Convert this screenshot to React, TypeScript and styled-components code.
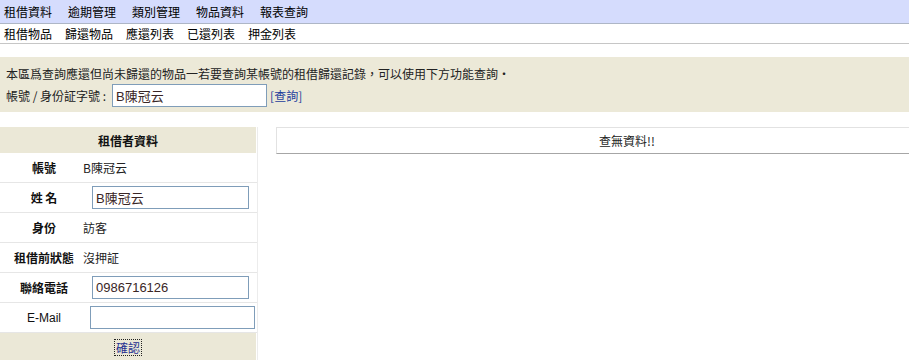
import React from "react";
import styled, { createGlobalStyle } from "styled-components";

const GlobalStyle = createGlobalStyle`
  html, body {
    margin: 0;
    padding: 0;
    overflow: hidden;
    background: #fff;
  }
  body {
    font-family: "Noto Sans CJK TC", "Liberation Sans", sans-serif;
    font-size: 12px;
    color: #1a1a1a;
  }
`;

const MenuBar = styled.nav`
  display: flex;
  align-items: center;
  gap: 16px;
  height: 23px;
  padding-left: 4px;
  background: #d5dcfd;
  border-bottom: 1px solid #aeb6c6;
  font-size: 12px;
  color: #000;
`;

const SubBar = styled.nav`
  display: flex;
  align-items: center;
  gap: 13px;
  height: 19px;
  padding-left: 4px;
  border-bottom: 1px solid #c6c6c6;
  font-size: 12px;
  color: #000;
`;

const MenuItem = styled.span`
  cursor: pointer;
  white-space: nowrap;
`;

const InfoBox = styled.section`
  margin-top: 13px;
  height: 55px;
  box-sizing: border-box;
  padding: 9px 6px 0;
  background: #ece9d8;
  color: #222;
`;

const InfoLine = styled.div`
  line-height: 16px;
  white-space: nowrap;
`;

const SearchRow = styled.div`
  display: flex;
  align-items: center;
  margin-top: 2px;
`;

const TextInput = styled.input<{ $w: number; $ml?: number }>`
  box-sizing: border-box;
  width: ${(p) => p.$w}px;
  height: 23px;
  margin: 0 0 0 ${(p) => p.$ml ?? 0}px;
  padding: 0 3px;
  border: 1px solid #7f9db9;
  background: #fff;
  font-family: "Liberation Sans", "Noto Sans CJK TC", sans-serif;
  font-size: 13px;
  color: #3a2626;
  outline: none;
`;

const BracketLink = styled.a`
  margin-left: 3px;
  color: #1c3c9c;
  text-decoration: none;
  cursor: pointer;
`;

const Main = styled.div`
  display: flex;
  align-items: flex-start;
  gap: 18px;
  margin-top: 15px;
`;

const Renter = styled.section`
  flex: 0 0 258px;
  box-sizing: border-box;
  border-right: 1px solid #ececec;
`;

const PanelHeader = styled.div`
  height: 26px;
  margin-right: 1px;
  display: flex;
  align-items: center;
  justify-content: center;
  background: #ebe8d7;
  font-weight: 700;
  color: #111;
`;

const Row = styled.div`
  display: grid;
  grid-template-columns: 82px 1fr;
  align-items: center;
  height: 29px;
  border-bottom: 1px solid #e6e6e6;
`;

const Label = styled.div<{ $latin?: boolean }>`
  padding-left: 6px;
  text-align: center;
  white-space: nowrap;
  font-weight: ${(p) => (p.$latin ? 400 : 700)};
  font-family: ${(p) =>
    p.$latin
      ? `"Liberation Sans", sans-serif`
      : `"Noto Sans CJK TC", sans-serif`};
  color: #111;
`;

const Value = styled.div`
  padding-left: 1px;
  display: flex;
  align-items: center;
  color: #222;
`;

const ConfirmRow = styled.div`
  height: 29px;
  margin-right: 1px;
  display: flex;
  align-items: center;
  justify-content: center;
  background: #ebe8d7;
`;

const ConfirmLink = styled.a`
  padding: 0 1px;
  border: 1px dotted #222;
  color: #1f2f8f;
  line-height: 15px;
  cursor: pointer;
`;

const Result = styled.section`
  flex: 1 1 auto;
  min-width: 0;
  box-sizing: border-box;
  height: 27px;
  padding-left: 68px;
  display: flex;
  align-items: center;
  justify-content: center;
  border: 1px solid #e2e2e2;
  border-bottom: 1px solid #a6a6a6;
  border-right: none;
  color: #222;
`;

const topMenu = ["租借資料", "逾期管理", "類別管理", "物品資料", "報表查詢"];
const subMenu = ["租借物品", "歸還物品", "應還列表", "已還列表", "押金列表"];

export default function App() {
  return (
    <>
      <GlobalStyle />
      <MenuBar>
        {topMenu.map((m) => (
          <MenuItem key={m}>{m}</MenuItem>
        ))}
      </MenuBar>
      <SubBar>
        {subMenu.map((m) => (
          <MenuItem key={m}>{m}</MenuItem>
        ))}
      </SubBar>

      <InfoBox>
        <InfoLine>
          本區爲查詢應還但尚未歸還的物品一若要查詢某帳號的租借歸還記錄，可以使用下方功能查詢・
        </InfoLine>
        <SearchRow>
          <span>帳號 / 身份証字號 :</span>
          <TextInput $w={155} $ml={6} defaultValue="B陳冠云" />
          <BracketLink>[查詢]</BracketLink>
        </SearchRow>
      </InfoBox>

      <Main>
        <Renter>
          <PanelHeader>租借者資料</PanelHeader>
          <Row>
            <Label>帳號</Label>
            <Value>B陳冠云</Value>
          </Row>
          <Row>
            <Label>姓 名</Label>
            <Value>
              <TextInput $w={157} $ml={9} defaultValue="B陳冠云" />
            </Value>
          </Row>
          <Row>
            <Label>身份</Label>
            <Value>訪客</Value>
          </Row>
          <Row>
            <Label>租借前狀態</Label>
            <Value>沒押証</Value>
          </Row>
          <Row>
            <Label>聯絡電話</Label>
            <Value>
              <TextInput $w={157} $ml={9} defaultValue="0986716126" />
            </Value>
          </Row>
          <Row>
            <Label $latin>E-Mail</Label>
            <Value>
              <TextInput $w={165} $ml={7} defaultValue="" />
            </Value>
          </Row>
          <ConfirmRow>
            <ConfirmLink>確認</ConfirmLink>
          </ConfirmRow>
        </Renter>
        <Result>查無資料!!</Result>
      </Main>
    </>
  );
}
